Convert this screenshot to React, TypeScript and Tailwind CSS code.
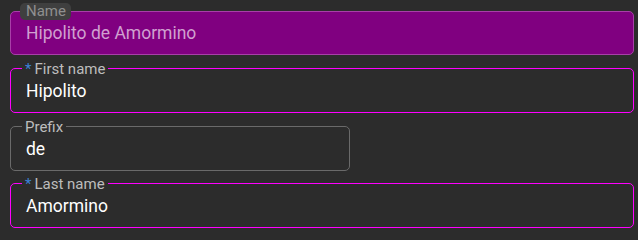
import type { ReactNode } from 'react'

type FieldProps = {
  label: string
  value: string
  required?: boolean
  width?: string
  className?: string
}

function Label({ children, required }: { children: ReactNode; required?: boolean }) {
  return (
    <span className="absolute left-[11px] top-[-9px] flex items-center bg-[#2c2c2c] px-[3px] text-[15px] leading-[18px] text-[#bdbdbd]">
      {required && <span className="mr-[3px] text-[#3b82d6]">*</span>}
      {children}
    </span>
  )
}

function Field({ label, value, required, width = 'w-full', className }: FieldProps) {
  return (
    <div
      className={`relative flex h-[45px] items-center rounded-[5px] border px-[15px] pt-[1px] ${width} ${
        required ? 'border-[#ff00ff]' : 'border-[#6a6a6a]'
      } ${className ?? ''}`}
    >
      <Label required={required}>{label}</Label>
      <span className="text-[17.5px] text-white">{value}</span>
    </div>
  )
}

export default function App() {
  return (
    <div
      className="min-h-screen bg-[#2c2c2c] pl-[10px] pr-[4px] pt-[11px]"
      style={{ fontFamily: 'Roboto, "Liberation Sans", sans-serif' }}
    >
      {/* read-only computed name */}
      <div className="relative flex h-[44px] items-center rounded-[5px] border border-[#a83fa8] bg-[#800080] px-[15px] pt-[1px]">
        <span className="absolute left-[9px] top-[-9px] rounded-[5px] bg-[#3f3f3f] pl-[6px] pr-[5px] text-[15px] leading-[17px] text-[#8f8f8f]">
          Name
        </span>
        <span className="text-[17.5px] text-[#d0a0d0]">Hipolito de Amormino</span>
      </div>

      <Field className="mt-[13px]" label="First name" value="Hipolito" required />
      <Field className="mt-[13px]" label="Prefix" value="de" width="w-[340px]" />
      <Field className="mt-[12px]" label="Last name" value="Amormino" required />
    </div>
  )
}
